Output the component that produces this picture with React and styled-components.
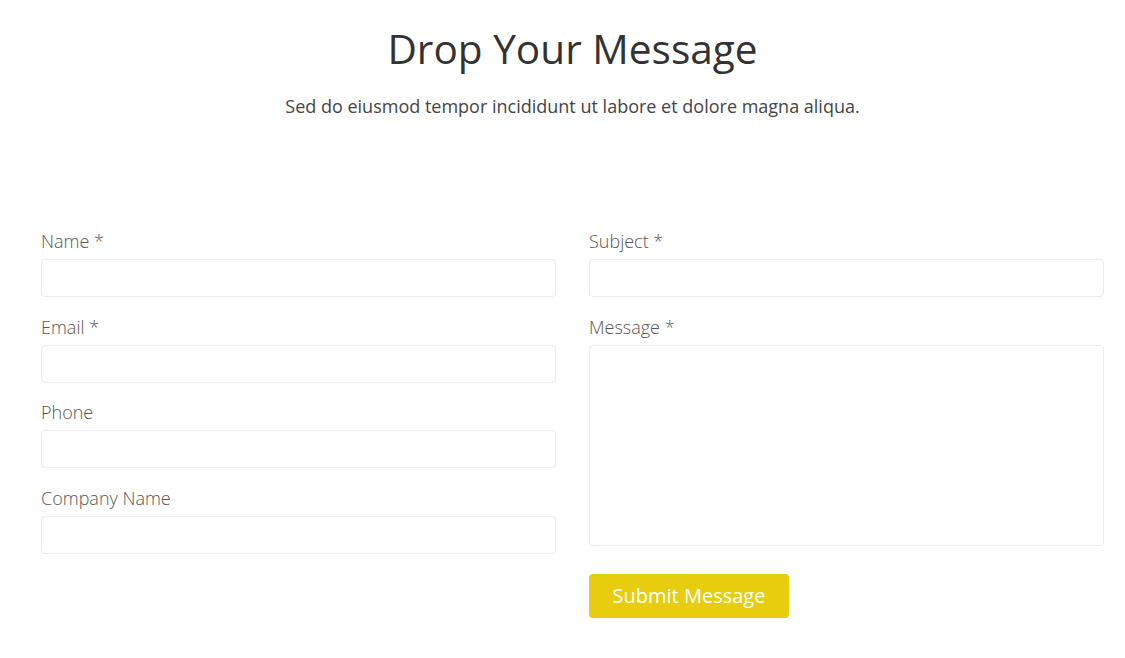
import React from 'react'
import styled, { createGlobalStyle } from 'styled-components'

const GlobalStyle = createGlobalStyle`
  body {
    margin: 0;
    background: #fff;
    font-family: "Open Sans", "Liberation Sans", sans-serif;
  }
`

const Section = styled.section`
  padding: 22px 21px 40px 41px;
`

const Heading = styled.div`
  text-align: center;
`

const Title = styled.h2`
  margin: 0;
  font-size: 40.6px;
  font-weight: 400;
  line-height: 54px;
  color: #333;
`

const Subtitle = styled.p`
  margin: 18px 0 0;
  font-size: 18px;
  line-height: 24px;
  color: #444;
`

const Form = styled.form`
  margin-top: 112px;
  display: grid;
  grid-template-columns: 1fr 1fr;
  column-gap: 33px;
`

const Column = styled.div`
  display: flex;
  flex-direction: column;
  gap: 18.6px;
`

const Field = styled.label`
  display: flex;
  flex-direction: column;
  gap: 7px;
`

const Label = styled.span`
  font-size: 18px;
  font-weight: 300;
  line-height: 22px;
  color: #5a5450;
`

const Input = styled.input`
  box-sizing: border-box;
  height: 38px;
  width: 100%;
  border: 1px solid #ebebeb;
  border-radius: 4px;
  background: #fff;
  font: inherit;
  padding: 0 12px;
  outline: none;
`

const TextArea = styled.textarea`
  box-sizing: border-box;
  height: 201px;
  width: 100%;
  border: 1px solid #ebebeb;
  border-radius: 4px;
  background: #fff;
  font: inherit;
  padding: 8px 12px;
  resize: none;
  outline: none;
`

const Button = styled.button`
  align-self: flex-start;
  margin-top: 9.4px;
  width: 200px;
  height: 44px;
  border: none;
  border-radius: 4px;
  background: #e8cc0e;
  color: #fff;
  font-family: inherit;
  font-size: 20px;
  font-weight: 400;
  cursor: pointer;
`

const leftFields = [
  { label: 'Name *' },
  { label: 'Email *' },
  { label: 'Phone' },
  { label: 'Company Name' },
]

const App = () => (
  <>
    <GlobalStyle />
    <Section>
      <Heading>
        <Title>Drop Your Message</Title>
        <Subtitle>Sed do eiusmod tempor incididunt ut labore et dolore magna aliqua.</Subtitle>
      </Heading>
      <Form onSubmit={e => e.preventDefault()}>
        <Column>
          {leftFields.map(f => (
            <Field key={f.label}>
              <Label>{f.label}</Label>
              <Input type="text" />
            </Field>
          ))}
        </Column>
        <Column>
          <Field>
            <Label>Subject *</Label>
            <Input type="text" />
          </Field>
          <Field>
            <Label>Message *</Label>
            <TextArea />
          </Field>
          <Button type="submit">Submit Message</Button>
        </Column>
      </Form>
    </Section>
  </>
)

export default App
